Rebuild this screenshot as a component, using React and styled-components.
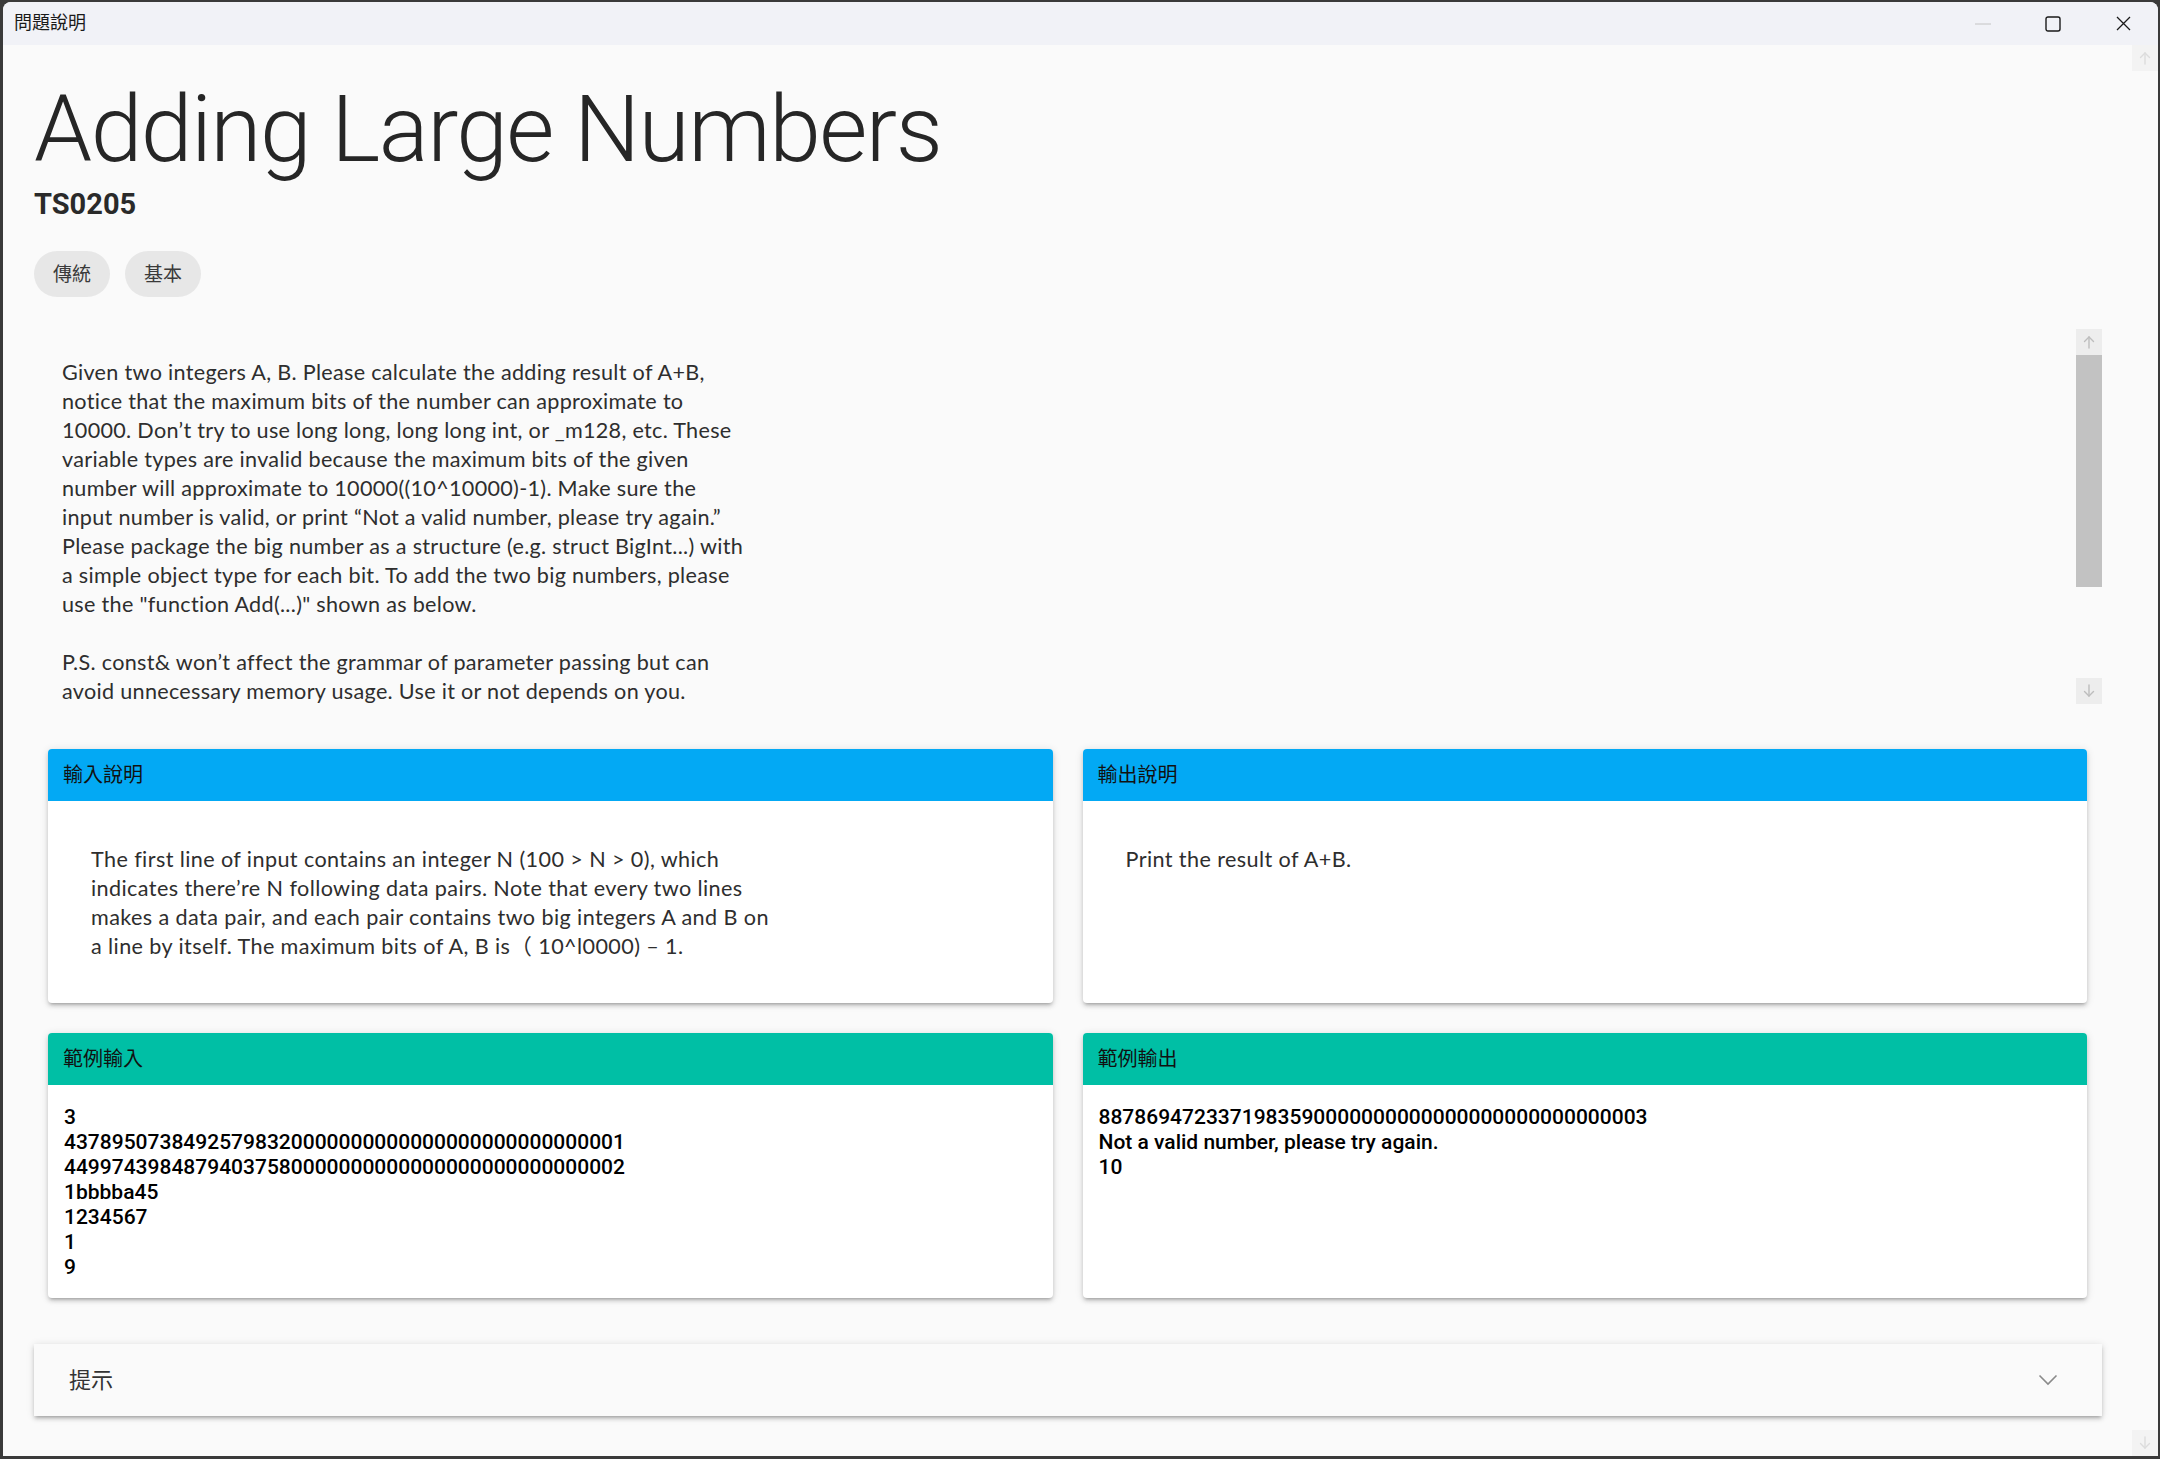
import React from "react";
import styled, { createGlobalStyle } from "styled-components";

const GlobalStyle = createGlobalStyle`
  html, body {
    margin: 0;
    padding: 0;
    background: #3a3a3a;
    overflow: hidden;
  }
`;

const descLines = [
  "Given two integers A, B. Please calculate the adding result of A+B,",
  "notice that the maximum bits of the number can approximate to",
  "10000. Don’t try to use long long, long long int, or _m128, etc. These",
  "variable types are invalid because the maximum bits of the given",
  "number will approximate to 10000((10^10000)-1). Make sure the",
  "input number is valid, or print “Not a valid number, please try again.”",
  "Please package the big number as a structure (e.g. struct BigInt...) with",
  "a simple object type for each bit. To add the two big numbers, please",
  'use the "function Add(...)" shown as below.',
  "",
  "P.S. const& won’t affect the grammar of parameter passing but can",
  "avoid unnecessary memory usage. Use it or not depends on you.",
];

const inputLines = [
  "The first line of input contains an integer N (100 > N > 0), which",
  "indicates there’re N following data pairs. Note that every two lines",
  "makes a data pair, and each pair contains two big integers A and B on",
  "a line by itself. The maximum bits of A, B is（ 10^l0000) – 1.",
];

const sampleIn = [
  "3",
  "4378950738492579832" + "0".repeat(27) + "1",
  "4499743984879403758" + "0".repeat(27) + "2",
  "1bbbba45",
  "1234567",
  "1",
  "9",
];
const sampleOut = [
  "8878694723371983590" + "0".repeat(26) + "3",
  "Not a valid number, please try again.",
  "10",
];

function Arrow({ up, color }) {
  return (
    <svg width="12" height="14" viewBox="0 0 12 14">
      <g fill="none" stroke={color} strokeWidth="1.4" strokeLinecap="round">
        {up ? (
          <>
            <path d="M6 13V2" />
            <path d="M1.5 6.5L6 2l4.5 4.5" />
          </>
        ) : (
          <>
            <path d="M6 1v11" />
            <path d="M1.5 7.5L6 12l4.5-4.5" />
          </>
        )}
      </g>
    </svg>
  );
}

export default function App() {
  return (
    <>
      <GlobalStyle />
      <Window>
        <TitleBar>
          <WindowTitle>問題說明</WindowTitle>
          <Controls>
            <ControlButton>
              <svg width="16" height="2" viewBox="0 0 16 2">
                <path d="M0 1h16" stroke="#c4c4c4" strokeWidth="1" />
              </svg>
            </ControlButton>
            <ControlButton>
              <svg width="16" height="16" viewBox="0 0 16 16">
                <rect x="1" y="1" width="14" height="14" rx="2" fill="none" stroke="#1a1a1a" strokeWidth="1.4" />
              </svg>
            </ControlButton>
            <ControlButton>
              <svg width="15" height="15" viewBox="0 0 15 15">
                <path d="M1 1l13 13M14 1L1 14" stroke="#1a1a1a" strokeWidth="1.3" />
              </svg>
            </ControlButton>
          </Controls>
        </TitleBar>

        <Body>
          <Main>
            <Heading>Adding Large Numbers</Heading>
            <ProblemId>TS0205</ProblemId>
            <ChipRow>
              <Chip>傳統</Chip>
              <Chip>基本</Chip>
            </ChipRow>

            <DescBox>
              <DescText>
                {descLines.map((l, i) => (
                  <TextLine key={i}>{l || "\u00a0"}</TextLine>
                ))}
              </DescText>
              <ScrollBar>
                <ScrollButton>
                  <Arrow up color="#bdbdbd" />
                </ScrollButton>
                <Thumb />
                <Track />
                <ScrollButton>
                  <Arrow color="#bdbdbd" />
                </ScrollButton>
              </ScrollBar>
            </DescBox>

            <CardGrid>
              <Card>
                <CardHeader $bg="#03a9f4">輸入說明</CardHeader>
                <ProseBody>
                  {inputLines.map((l, i) => (
                    <TextLine key={i}>{l}</TextLine>
                  ))}
                </ProseBody>
              </Card>
              <Card>
                <CardHeader $bg="#03a9f4">輸出說明</CardHeader>
                <ProseBody>
                  <TextLine>Print the result of A+B.</TextLine>
                </ProseBody>
              </Card>
              <Card>
                <CardHeader $bg="#00bfa5">範例輸入</CardHeader>
                <SampleBody>
                  {sampleIn.map((l, i) => (
                    <SampleLine key={i}>{l}</SampleLine>
                  ))}
                </SampleBody>
              </Card>
              <Card>
                <CardHeader $bg="#00bfa5">範例輸出</CardHeader>
                <SampleBody>
                  {sampleOut.map((l, i) => (
                    <SampleLine key={i}>{l}</SampleLine>
                  ))}
                </SampleBody>
              </Card>
            </CardGrid>

            <HintBar>
              <HintLabel>提示</HintLabel>
              <svg width="20" height="12" viewBox="0 0 20 12">
                <path d="M1.5 1.5L10 10l8.5-8.5" fill="none" stroke="#8a8a8a" strokeWidth="1.6" />
              </svg>
            </HintBar>
          </Main>

          <PageScroll>
            <PageScrollButton>
              <Arrow up color="#dcdcdc" />
            </PageScrollButton>
            <PageScrollButton>
              <Arrow color="#dcdcdc" />
            </PageScrollButton>
          </PageScroll>
        </Body>
      </Window>
    </>
  );
}

const Window = styled.div`
  width: 2155px;
  height: 1454px;
  margin: 2px 0 0 3px;
  background: #fafafa;
  border-radius: 8px 8px 0 0;
  overflow: hidden;
  display: flex;
  flex-direction: column;
`;

const TitleBar = styled.div`
  height: 43px;
  flex: none;
  background: #f1f2f7;
  display: flex;
  align-items: center;
  padding-left: 11px;
`;

const WindowTitle = styled.div`
  font-family: "Noto Sans CJK TC", sans-serif;
  font-size: 18px;
  line-height: 1.2;
  padding-bottom: 3px;
  color: #1a1a1a;
`;

const Controls = styled.div`
  margin-left: auto;
  display: flex;
  height: 100%;
`;

const ControlButton = styled.div`
  width: 70px;
  height: 100%;
  display: flex;
  align-items: center;
  justify-content: center;
`;

const Body = styled.div`
  flex: 1;
  min-height: 0;
  display: flex;
`;

const Main = styled.div`
  flex: 1;
  min-width: 0;
  overflow: hidden;
  padding: 0 30px 0 31px;
  display: flex;
  flex-direction: column;
`;

const Heading = styled.h1`
  margin: 37px 0 0;
  font-family: Roboto, sans-serif;
  font-weight: 300;
  font-size: 93px;
  line-height: 96px;
  letter-spacing: -1.5px;
  color: #262626;
`;

const ProblemId = styled.div`
  margin-top: 10px;
  font-family: Roboto, sans-serif;
  font-weight: 700;
  font-size: 29px;
  line-height: 32px;
  color: #2a2a2a;
`;

const ChipRow = styled.div`
  display: flex;
  gap: 15px;
  margin-top: 31px;
`;

const Chip = styled.span`
  height: 46px;
  padding: 0 19px 2px;
  box-sizing: border-box;
  border-radius: 23px;
  background: #e7e7e7;
  display: inline-flex;
  align-items: center;
  font-family: "Noto Sans CJK TC", sans-serif;
  font-size: 19px;
  line-height: 1.2;
  color: #3a3a3a;
`;

const DescBox = styled.div`
  margin-top: 32px;
  height: 375px;
  flex: none;
  display: flex;
`;

const DescText = styled.div`
  flex: 1;
  padding: 29px 0 0 28px;
  font-family: Lato, "Noto Sans CJK TC", sans-serif;
  font-size: 21.6px;
  letter-spacing: 0.3px;
  line-height: 29px;
  color: #2e2e2e;
`;

const TextLine = styled.div`
  white-space: nowrap;
`;

const ScrollBar = styled.div`
  width: 26px;
  display: flex;
  flex-direction: column;
`;

const ScrollButton = styled.div`
  height: 26px;
  background: #ededed;
  display: flex;
  align-items: center;
  justify-content: center;
`;

const Thumb = styled.div`
  height: 232px;
  background: #c2c2c2;
`;

const Track = styled.div`
  flex: 1;
`;

const CardGrid = styled.div`
  margin-top: 45px;
  padding: 0 15px 0 14px;
  display: grid;
  grid-template-columns: 1fr 1fr;
  gap: 30px;
`;

const Card = styled.div`
  background: #ffffff;
  border-radius: 4px;
  box-shadow: 0 3px 3px -2px rgba(0, 0, 0, 0.2), 0 3px 4px 0 rgba(0, 0, 0, 0.14),
    0 1px 8px 0 rgba(0, 0, 0, 0.12);
  display: flex;
  flex-direction: column;
`;

const CardHeader = styled.div`
  height: 52px;
  flex: none;
  box-sizing: border-box;
  border-radius: 4px 4px 0 0;
  background: ${(p) => p.$bg};
  display: flex;
  align-items: center;
  padding: 0 0 3px 15px;
  font-family: "Noto Sans CJK TC", sans-serif;
  font-size: 20px;
  line-height: 1.2;
  color: #111111;
`;

const ProseBody = styled.div`
  padding: 44px 43px 42px;
  font-family: Lato, "Noto Sans CJK TC", sans-serif;
  font-size: 21.6px;
  letter-spacing: 0.4px;
  line-height: 29px;
  color: #2e2e2e;
`;

const SampleBody = styled.div`
  padding: 20px 16px 18px;
  font-family: Roboto, sans-serif;
  font-weight: 500;
  font-size: 21px;
  line-height: 25px;
  color: #000000;
`;

const SampleLine = styled.div`
  white-space: nowrap;
`;

const HintBar = styled.div`
  margin-top: 46px;
  height: 72px;
  flex: none;
  box-sizing: border-box;
  background: #fafafa;
  box-shadow: 0 3px 3px -2px rgba(0, 0, 0, 0.2), 0 3px 4px 0 rgba(0, 0, 0, 0.14),
    0 1px 8px 0 rgba(0, 0, 0, 0.12);
  display: flex;
  align-items: center;
  justify-content: space-between;
  padding: 0 44px 0 35px;
`;

const HintLabel = styled.div`
  font-family: "Noto Sans CJK TC", sans-serif;
  font-size: 22px;
  line-height: 1.2;
  padding-bottom: 4px;
  color: #333333;
`;

const PageScroll = styled.div`
  width: 26px;
  display: flex;
  flex-direction: column;
  justify-content: space-between;
`;

const PageScrollButton = styled.div`
  height: 26px;
  background: #f3f3f3;
  display: flex;
  align-items: center;
  justify-content: center;
`;
